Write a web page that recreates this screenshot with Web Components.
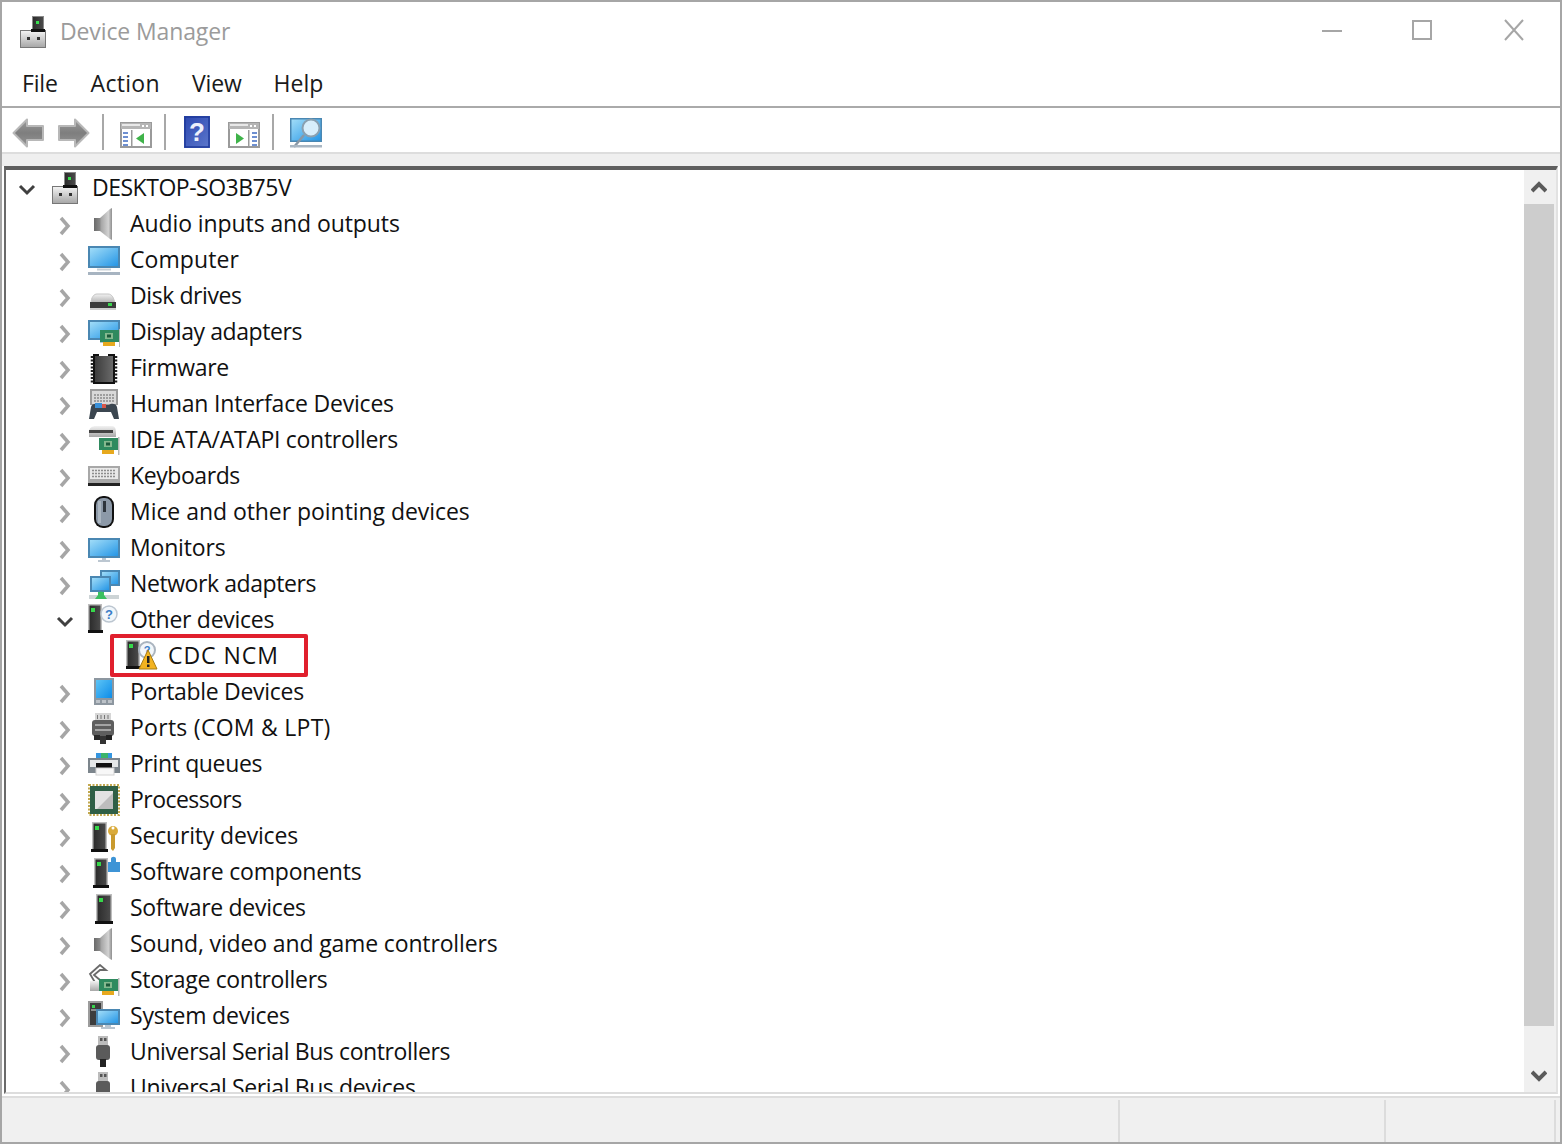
<!DOCTYPE html>
<html><head><meta charset="utf-8"><title>Device Manager</title>
<style>html,body{margin:0;padding:0;background:#fff;overflow:hidden}</style></head>
<body>
<dm-window>
  <dm-titlebar slot="title" label="Device Manager"></dm-titlebar>
  <dm-menubar slot="menu"><span style="letter-spacing:-.2px;margin-right:1px">File</span><span style="letter-spacing:.3px">Action</span><span style="letter-spacing:-.15px">View</span><span style="letter-spacing:0">Help</span></dm-menubar>
  <dm-toolbar slot="tools"></dm-toolbar>
  <dm-tree slot="tree">
    <dm-row level="0" ls="-.49" open icon="root" label="DESKTOP-SO3B75V"></dm-row>
    <dm-row level="1" ls="-.09" icon="audio" label="Audio inputs and outputs"></dm-row>
    <dm-row level="1" ls=".08" icon="computer" label="Computer"></dm-row>
    <dm-row level="1" ls="-.42" icon="disk" label="Disk drives"></dm-row>
    <dm-row level="1" ls="-.42" icon="display" label="Display adapters"></dm-row>
    <dm-row level="1" ls="-.3" icon="firmware" label="Firmware"></dm-row>
    <dm-row level="1" ls="-.2" icon="hid" label="Human Interface Devices"></dm-row>
    <dm-row level="1" ls="-.3" icon="ide" label="IDE ATA/ATAPI controllers"></dm-row>
    <dm-row level="1" ls="-.42" icon="keyboard" label="Keyboards"></dm-row>
    <dm-row level="1" ls="-.05" icon="mouse" label="Mice and other pointing devices"></dm-row>
    <dm-row level="1" ls="-.17" icon="monitor" label="Monitors"></dm-row>
    <dm-row level="1" ls="-.42" icon="network" label="Network adapters"></dm-row>
    <dm-row level="1" ls="-.27" open icon="other" label="Other devices"></dm-row>
    <dm-row level="2" ls=".95" leaf mark icon="unknown" label="CDC NCM"></dm-row>
    <dm-row level="1" ls="-.3" icon="portable" label="Portable Devices"></dm-row>
    <dm-row level="1" ls=".27" icon="ports" label="Ports (COM &amp; LPT)"></dm-row>
    <dm-row level="1" ls="-.36" icon="print" label="Print queues"></dm-row>
    <dm-row level="1" ls="-.55" icon="cpu" label="Processors"></dm-row>
    <dm-row level="1" ls="-.17" icon="security" label="Security devices"></dm-row>
    <dm-row level="1" ls="-.22" icon="swcomp" label="Software components"></dm-row>
    <dm-row level="1" ls="-.3" icon="swdev" label="Software devices"></dm-row>
    <dm-row level="1" ls="-.15" icon="audio" label="Sound, video and game controllers"></dm-row>
    <dm-row level="1" ls="-.32" icon="storage" label="Storage controllers"></dm-row>
    <dm-row level="1" ls="-.2" icon="system" label="System devices"></dm-row>
    <dm-row level="1" ls="-.39" icon="usb" label="Universal Serial Bus controllers"></dm-row>
    <dm-row level="1" ls="-.39" icon="usb" label="Universal Serial Bus devices"></dm-row>
  </dm-tree>
  <dm-statusbar slot="status"></dm-statusbar>
</dm-window>
<script>
const FONT = '"Open Sans","Noto Sans","Liberation Sans",sans-serif';
const DEFS = `<defs>
<linearGradient id="scr" x1="0" y1="0" x2="1" y2="1"><stop offset="0" stop-color="#a0dcf8"/><stop offset="1" stop-color="#2596e6"/></linearGradient>
<linearGradient id="scr2" x1="0" y1="0" x2="1" y2="1"><stop offset="0" stop-color="#5cc4f6"/><stop offset="1" stop-color="#0d8ce8"/></linearGradient>
<linearGradient id="spk" x1="0" y1="0" x2="1" y2="0"><stop offset="0" stop-color="#6a6a6a"/><stop offset=".32" stop-color="#8a8a8a"/><stop offset=".4" stop-color="#a6a6a6"/><stop offset=".8" stop-color="#d2d2d2"/><stop offset="1" stop-color="#8e8e8e"/></linearGradient>
<linearGradient id="twr" x1="0" y1="0" x2="1" y2="0"><stop offset="0" stop-color="#2c2c2c"/><stop offset="1" stop-color="#4a4a4a"/></linearGradient>
<linearGradient id="gry" x1="0" y1="0" x2="0" y2="1"><stop offset="0" stop-color="#f2f2f2"/><stop offset="1" stop-color="#a8a8a8"/></linearGradient>
<linearGradient id="chp" x1="0" y1="0" x2="1" y2="0"><stop offset="0" stop-color="#3c3c3c"/><stop offset="1" stop-color="#6a6a6a"/></linearGradient>
<linearGradient id="arr" x1="0" y1="0" x2="0" y2="1"><stop offset="0" stop-color="#9c9c9c"/><stop offset=".5" stop-color="#7e7e7e"/><stop offset="1" stop-color="#959595"/></linearGradient>
<linearGradient id="hlp" x1="0" y1="0" x2="1" y2="1"><stop offset="0" stop-color="#2b47b0"/><stop offset="1" stop-color="#5d78cc"/></linearGradient>
</defs>`;
const mon=(x,y,w,h)=>`<rect x="${x}" y="${y}" width="${w}" height="${h}" fill="#4a87b2"/><rect x="${x+2}" y="${y+2}" width="${w-4}" height="${h-4}" fill="url(#scr)"/>`;
const tower=(x,y,w,h,led=3)=>`<rect x="${x}" y="${y}" width="${w}" height="${h-2}" fill="#bdbdbd"/><rect x="${x+1.5}" y="${y+1.5}" width="${w-3}" height="${h-4}" fill="url(#twr)"/><rect x="${x+led}" y="${y+4}" width="4" height="4" fill="#36d84a"/><rect x="${x-1}" y="${y+h-3}" width="${w+2}" height="3" fill="#111"/>`;
const card=(x,y)=>`<rect x="${x}" y="${y}" width="19" height="12" fill="#2f8a5f"/><rect x="${x+5}" y="${y+3}" width="8" height="6" fill="#86b98f"/><rect x="${x+7}" y="${y+4.5}" width="4" height="3" fill="#1c5a3c"/><rect x="${x+3}" y="${y+12}" width="12" height="4" fill="#e7a91e"/><rect x="${x+19}" y="${y-1}" width="1.5" height="18" fill="#b9b9b9"/>`;
const I = {
 root:`<rect x="2" y="14" width="26" height="18" fill="#777"/><rect x="3" y="15" width="24" height="16" fill="url(#gry)"/><rect x="9" y="21" width="3" height="3" fill="#333"/><rect x="19" y="21" width="3" height="3" fill="#333"/><rect x="14" y="0" width="12" height="16" fill="#8a8a8a"/><rect x="15" y="1" width="10" height="15" fill="url(#twr)"/><rect x="18" y="5" width="3" height="3" fill="#38e04e"/><rect x="13" y="13" width="14" height="3" fill="#111"/>`,
 audio:`<path d="M6 10H12L22 1 24 0V32L22 31 12 23H6Z" fill="url(#spk)"/>`,
 computer:`${mon(0,2,32,22)}<rect x="9" y="24.500" width="14" height="2" fill="#c7cfd6"/><rect x="0" y="28" width="32" height="3" fill="#a7b4c1"/>`,
 disk:`<path d="M3 24C3 17 6 14 9 14H20C24 14 26 18 27 24Z" fill="url(#gry)" stroke="#c4c4c4"/><rect x="2" y="22" width="26" height="6" fill="#3b3b3b"/><rect x="2" y="28" width="26" height="2" fill="#cfcfcf"/><rect x="20" y="23" width="4" height="3" fill="#39d44e"/>`,
 display:`${mon(0,4,32,20)}<rect x="12" y="24" width="6" height="3" fill="#b9c6d2"/>${card(12,14)}`,
 firmware:`<path d="M5 2H11V4C12 6 19 6 20 4V2H27V32H5Z" fill="#111"/><rect x="7" y="4" width="18" height="26" fill="url(#chp)"/><path d="M4 4V31M28 4V31" stroke="#222" stroke-width="2.500" stroke-dasharray="2 1.500"/>`,
 hid:`<rect x="2" y="1" width="28" height="16" fill="#9c9c9c"/><rect x="4" y="3" width="24" height="13" fill="#d9d9d9"/><path d="M6 7H26M6 10H26M6 13H26" stroke="#8a8a8a" stroke-width="1.500" stroke-dasharray="2 1"/><path d="M1 31 3 19C4 15 9 15 11 17H21C23 15 28 15 29 19L31 31H26L23 24H9L6 31Z" fill="#3b4650"/><rect x="7" y="15" width="7" height="5" fill="#3a90d8"/><rect x="14" y="16" width="4" height="4" fill="#d7574a"/>`,
 ide:`<path d="M1 8C1 4 4 2 8 2H24C27 2 28 5 28 9V13H1Z" fill="url(#gry)"/><rect x="1" y="6" width="24" height="3" fill="#444"/>${card(11,14)}`,
 keyboard:`<rect x="0" y="6" width="32" height="20" fill="#a8a8a8"/><rect x="2" y="8" width="28" height="11" fill="#e9e9e9"/><path d="M4 10.500H28M4 13.500H28M4 16.500H28" stroke="#8d8d8d" stroke-width="1.500" stroke-dasharray="2 1"/><rect x="0" y="23" width="32" height="3" fill="#222"/>`,
 mouse:`<rect x="6" y="0" width="20" height="32" rx="9" fill="#111"/><rect x="8" y="2" width="16" height="28" rx="7" fill="#8c99a8"/><rect x="15" y="5" width="3" height="11" fill="#2d343c"/><rect x="10" y="5" width="3" height="22" fill="#c0c9d2" opacity=".6"/>`,
 monitor:`${mon(0,6,32,20)}<rect x="14" y="26" width="4" height="2" fill="#bcc7d1"/><rect x="10" y="28" width="12" height="2" fill="#bcc7d1"/>`,
 network:`${mon(12,2,20,16)}${mon(2,8,21,16)}<rect x="1" y="27" width="30" height="4" fill="#cdd4d6"/><path d="M13 23 7 31H19Z" fill="#3cc060"/><rect x="10" y="24" width="6" height="4" fill="#3cc060"/>`,
 other:`${tower(0,0,14,29)}<circle cx="21" cy="10" r="8" fill="#f2f6fa" stroke="#bcc6d0" stroke-width="1.500"/><text x="21" y="15" font-size="13" font-family="Liberation Sans" font-weight="700" text-anchor="middle" fill="#3a7dc9">?</text>`,
 unknown:`${tower(0,0,14,29)}<circle cx="21" cy="10" r="8" fill="#f2f6fa" stroke="#aab4bf" stroke-width="2"/><text x="21" y="14" font-size="11" font-family="Liberation Sans" font-weight="700" text-anchor="middle" fill="#3a7dc9">?</text><path d="M22 10 31 29H13Z" fill="#f3b320" stroke="#a97d10" stroke-width="1"/><rect x="21" y="16" width="2.500" height="7" fill="#222"/><rect x="21" y="24.500" width="2.500" height="2.500" fill="#222"/>`,
 portable:`<rect x="6" y="2" width="20" height="27" fill="#8d97a0"/><rect x="8" y="4" width="16" height="18" fill="url(#scr2)"/><path d="M8 24h4v3h-4zM14 24h4v3h-4zM20 24h4v3h-4z" fill="#bcc2c8"/>`,
 ports:`<rect x="7" y="1" width="16" height="9" fill="#d6d6d6"/><path d="M9.500 3v4M13 3v4M16.500 3v4M20 3v4" stroke="#777"/><rect x="4" y="8" width="22" height="16" rx="3" fill="#5e5e5e"/><path d="M7 13H23M7 18H23" stroke="#a4a4a4" stroke-width="2"/><rect x="6" y="23" width="6" height="5" fill="#2a2a2a"/><rect x="18" y="23" width="6" height="5" fill="#222"/><rect x="12" y="24" width="6" height="8" fill="#333"/>`,
 print:`<rect x="8" y="5" width="16" height="7" fill="#3596e0"/><rect x="13" y="5" width="7" height="7" fill="#3bb36a"/><rect x="0" y="10" width="32" height="15" fill="#7c858c"/><rect x="2" y="12" width="28" height="7" fill="#e5e7e8"/><rect x="8" y="15" width="16" height="7" fill="#111"/><rect x="8" y="20" width="18" height="7" fill="#f7f7f7" stroke="#d2d2d2"/>`,
 cpu:`<rect x="2" y="2" width="28" height="28" fill="#2f5f46"/><rect x="1" y="1" width="30" height="30" fill="none" stroke="#c2a84e" stroke-width="2" stroke-dasharray="2 1.500"/><rect x="7" y="7" width="18" height="18" fill="#e2e2e2"/><path d="M9 25 25 9V25Z" fill="#bdbdbd"/>`,
 security:`${tower(4,2,15,30)}<circle cx="25" cy="11" r="5" fill="#d9aa3a"/><circle cx="25" cy="8" r="1.500" fill="#fff"/><path d="M23 14H27V28L25 31 23 29Z" fill="#c99a2e"/>`,
 swcomp:`${tower(6,2,14,30)}<path d="M20 6H23V3C23 0 28 0 28 3V6H32V16H20Z" fill="#3d94d6"/>`,
 swdev:`${tower(8,2,16,30)}`,
 storage:`<path d="M2 10 12 1 18 6 12 6 6 11 12 16H22L16 20H8Z" fill="#fff" stroke="#6a6a6a" stroke-width="1.800"/><rect x="2" y="17" width="12" height="10" fill="url(#gry)"/>${card(11,15)}`,
 system:`<rect x="0" y="1" width="15" height="26" fill="#9c9c9c"/><rect x="2" y="3" width="11" height="22" fill="#3d3d3d"/><rect x="4" y="5" width="3" height="3" fill="#38d44e"/><path d="M3 10H12" stroke="#ddd"/>${mon(8,9,24,16)}<rect x="17" y="25" width="6" height="2" fill="#b9c5d0"/><rect x="13" y="27" width="14" height="2" fill="#b9c5d0"/>`,
 usb:`<rect x="10" y="0" width="10" height="10" fill="#bcbcbc"/><rect x="12" y="2" width="2.500" height="3" fill="#555"/><rect x="16" y="2" width="2.500" height="3" fill="#555"/><rect x="8" y="9" width="14" height="15" rx="3" fill="#5b5b5b"/><rect x="12" y="23" width="6" height="8" fill="#232323"/>`
};
I.back = `<path d="M1.500 15 15 1.500V8H31V22H15V28.500Z" fill="url(#arr)" stroke="#b8b8b8" stroke-width="2" stroke-linejoin="round"/>`;
const svg=(n,w=32,h=32)=>`<svg xmlns="http://www.w3.org/2000/svg" width="${w}" height="${h}" viewBox="0 0 ${w} ${h}" style="display:block">${DEFS}${I[n]}</svg>`;

class DmWindow extends HTMLElement{constructor(){super();this.attachShadow({mode:'open'}).innerHTML=`<style>
:host{display:flex;flex-direction:column;box-sizing:border-box;width:1562px;height:1144px;border:2px solid #a6a6a6;background:#fff;font-family:${FONT};color:#111;overflow:hidden}
.mid{flex:1;min-height:0;display:flex}
slot[name=tree]{display:contents}
</style><slot name="title"></slot><slot name="menu"></slot><slot name="tools"></slot><div class="mid"><slot name="tree"></slot></div><slot name="status"></slot>`}}
class DmTitlebar extends HTMLElement{constructor(){super();this.attachShadow({mode:'open'})}connectedCallback(){this.shadowRoot.innerHTML=`<style>
:host{display:flex;align-items:center;height:60px;padding-left:16px;font-size:23px;color:#9b9b9b}
.t{margin-left:10px;margin-top:-2px;letter-spacing:-.12px}
.b{margin-left:auto;margin-right:20px;display:flex}
.b svg{display:block}
</style>${svg('root')}<span class="t">${this.getAttribute('label')}</span><div class="b">
<svg width="238" height="60" viewBox="0 0 238 60"><path d="M20 29H40" stroke="#a6a6a6" stroke-width="2"/><rect x="111" y="19" width="18" height="18" fill="none" stroke="#a6a6a6" stroke-width="2"/><path d="M203 18 221 38M221 18 203 38" stroke="#a6a6a6" stroke-width="2"/></svg></div>`}}
class DmMenubar extends HTMLElement{constructor(){super();this.attachShadow({mode:'open'}).innerHTML=`<style>
:host{display:flex;box-sizing:border-box;height:46px;padding:0 0 2px 20px;gap:32px;align-items:center;border-bottom:2px solid #aaa;font-size:23px;color:#1a1a1a}
</style><slot></slot>`}}
class DmToolbar extends HTMLElement{constructor(){super();this.attachShadow({mode:'open'}).innerHTML=`<style>
:host{display:flex;flex-direction:column}
.bar{height:44px;box-sizing:border-box;padding-top:4px;display:flex;align-items:center;padding-left:10px;background:#fff}
.s{display:block;width:2px;height:36px;background:#a8a8a8}
svg{display:block}
.band{height:12px;background:#efefef;border-top:2px solid #ddd}
</style><div class="bar">
<svg style="margin-top:2px" width="32" height="30" viewBox="0 0 32 30">${DEFS}${I.back}</svg>
<svg style="margin-left:14px;margin-top:2px;transform:scaleX(-1)" width="32" height="30" viewBox="0 0 32 30">${DEFS}${I.back}</svg>
<i class="s" style="margin-left:12px"></i>
<svg style="margin-left:16px;margin-top:6px" width="32" height="26" viewBox="0 0 32 26"><rect x="1" y="1" width="30" height="24" fill="#fff" stroke="#9a9a9a" stroke-width="2"/><rect x="1" y="1" width="30" height="6" fill="#b5b5b5"/><rect x="2" y="2" width="18" height="2" fill="#e8e8e8"/><rect x="22" y="3" width="2" height="2" fill="#fff"/><rect x="26" y="3" width="2" height="2" fill="#fff"/><path d="M3 11h5M3 15h5M3 19h5M3 23h5" stroke="#6e8fd0" stroke-width="2"/><rect x="11" y="8" width="1.500" height="16" fill="#9a9a9a"/><path d="M24 11V22L16 16.500Z" fill="#3fb34a"/></svg>
<i class="s" style="margin-left:12px"></i>
<svg style="margin-left:18px" width="26" height="32" viewBox="0 0 26 32">${DEFS}<rect width="26" height="32" fill="url(#hlp)"/><rect x="1" y="1" width="24" height="30" fill="none" stroke="#1f3a9a" stroke-width="1.500"/><text x="13" y="25" font-size="26" font-family="Liberation Sans" font-weight="700" text-anchor="middle" fill="#eef1fb">?</text></svg>
<svg style="margin-left:18px;margin-top:6px" width="32" height="26" viewBox="0 0 32 26"><rect x="1" y="1" width="30" height="24" fill="#fff" stroke="#9a9a9a" stroke-width="2"/><rect x="1" y="1" width="30" height="6" fill="#b5b5b5"/><rect x="2" y="2" width="18" height="2" fill="#e8e8e8"/><rect x="22" y="3" width="2" height="2" fill="#fff"/><rect x="26" y="3" width="2" height="2" fill="#fff"/><path d="M24 11h5M24 15h5M24 19h5M24 23h5" stroke="#6e8fd0" stroke-width="2"/><rect x="20" y="8" width="1.500" height="16" fill="#9a9a9a"/><path d="M8 11V22L16 16.500Z" fill="#3fb34a"/></svg>
<i class="s" style="margin-left:12px"></i>
<svg style="margin-left:16px;margin-top:2px" width="32" height="30" viewBox="0 0 32 30">${DEFS}<rect x="0" y="0" width="32" height="24" fill="#4a87b2"/><rect x="1.500" y="1.500" width="29" height="21" fill="url(#scr)"/><circle cx="21" cy="10" r="8.500" fill="#d8eefb" stroke="#8aa0b0" stroke-width="2"/><path d="M14 17 4 29" stroke="#8a98a5" stroke-width="2.500"/><rect x="0" y="27" width="32" height="2.500" fill="#a9b6c2"/></svg>
</div><div class="band"></div>`}}
class DmTree extends HTMLElement{constructor(){super();this.attachShadow({mode:'open'}).innerHTML=`<style>
:host{display:flex;flex:1;min-width:0;box-sizing:border-box;height:100%;margin:0 2px;border-top:4px solid #5f5f5f;border-left:2px solid #6a6a6a;border-right:2px solid #e2e2e2;border-bottom:2px solid #ddd;overflow:hidden;background:#fff}
.rows{flex:1;min-width:0;overflow:hidden}
.sb{width:32px;display:flex;flex-direction:column;background:#f0f0f0}
.up,.dn{height:34px;display:flex;align-items:center;justify-content:center;padding-right:2px;box-sizing:border-box}
.th{width:30px;height:822px;background:#cdcdcd}
.tr{flex:1}
.dn{height:36px;padding-top:4px}
svg{display:block}
</style><div class="rows"><slot></slot></div><div class="sb"><div class="up"><svg width="16" height="12" viewBox="0 0 16 12"><path d="M1 10 8 3 15 10" fill="none" stroke="#5a5a5a" stroke-width="4"/></svg></div><div class="th"></div><div class="tr"></div><div class="dn"><svg width="16" height="12" viewBox="0 0 16 12"><path d="M1 2 8 9 15 2" fill="none" stroke="#5a5a5a" stroke-width="4"/></svg></div></div>`}}
class DmRow extends HTMLElement{constructor(){super();this.attachShadow({mode:'open'})}connectedCallback(){
const l=+this.getAttribute('level');const open=this.hasAttribute('open'),leaf=this.hasAttribute('leaf');
const tw=leaf?'':open?`<svg width="18" height="12" viewBox="0 0 18 12"><path d="M2 2 9 9 16 2" fill="none" stroke="#404040" stroke-width="3"/></svg>`:`<svg width="18" height="20" viewBox="0 0 18 20"><path d="M5 2 12 10 5 18" fill="none" stroke="#a6a6a6" stroke-width="3.500"/></svg>`;
this.shadowRoot.innerHTML=`<style>
:host{display:block;height:36px}
.r{position:relative;display:flex;align-items:center;height:36px;box-sizing:border-box;padding-left:${12+38*l}px;font-size:23px;color:#111;white-space:nowrap}
.tw{width:18px;display:flex;align-items:center;justify-content:center;margin-top:4px;margin-right:14px}
.ic{width:32px;height:32px;margin-right:10px}
.lb{margin-top:-2px;letter-spacing:${this.getAttribute('ls')||0}px}
svg{display:block}
.mark{position:absolute;left:${12+38*l+16}px;top:-4px;width:198px;height:43px;box-sizing:border-box;border:4px solid #e01f2d;border-radius:2px;pointer-events:none}
</style><div class="r"><span class="tw">${tw}</span><span class="ic">${svg(this.getAttribute('icon'))}</span><span class="lb">${this.getAttribute('label').replace(/&/g,'&amp;')}</span>${this.hasAttribute('mark')?'<i class="mark"></i>':''}</div>`}}
class DmStatusbar extends HTMLElement{constructor(){super();this.attachShadow({mode:'open'}).innerHTML=`<style>
:host{display:flex;height:46px;margin-top:2px;border-top:2px solid #ddd;background:#f0f0f0;box-sizing:border-box;padding-top:2px}
div{border-right:2px solid #dcdcdc;box-sizing:border-box}
</style><div style="width:1118px"></div><div style="width:266px"></div><div style="width:170px"></div>`}}
customElements.define('dm-window',DmWindow);customElements.define('dm-titlebar',DmTitlebar);customElements.define('dm-menubar',DmMenubar);customElements.define('dm-toolbar',DmToolbar);customElements.define('dm-tree',DmTree);customElements.define('dm-row',DmRow);customElements.define('dm-statusbar',DmStatusbar);
</script>
</body></html>
